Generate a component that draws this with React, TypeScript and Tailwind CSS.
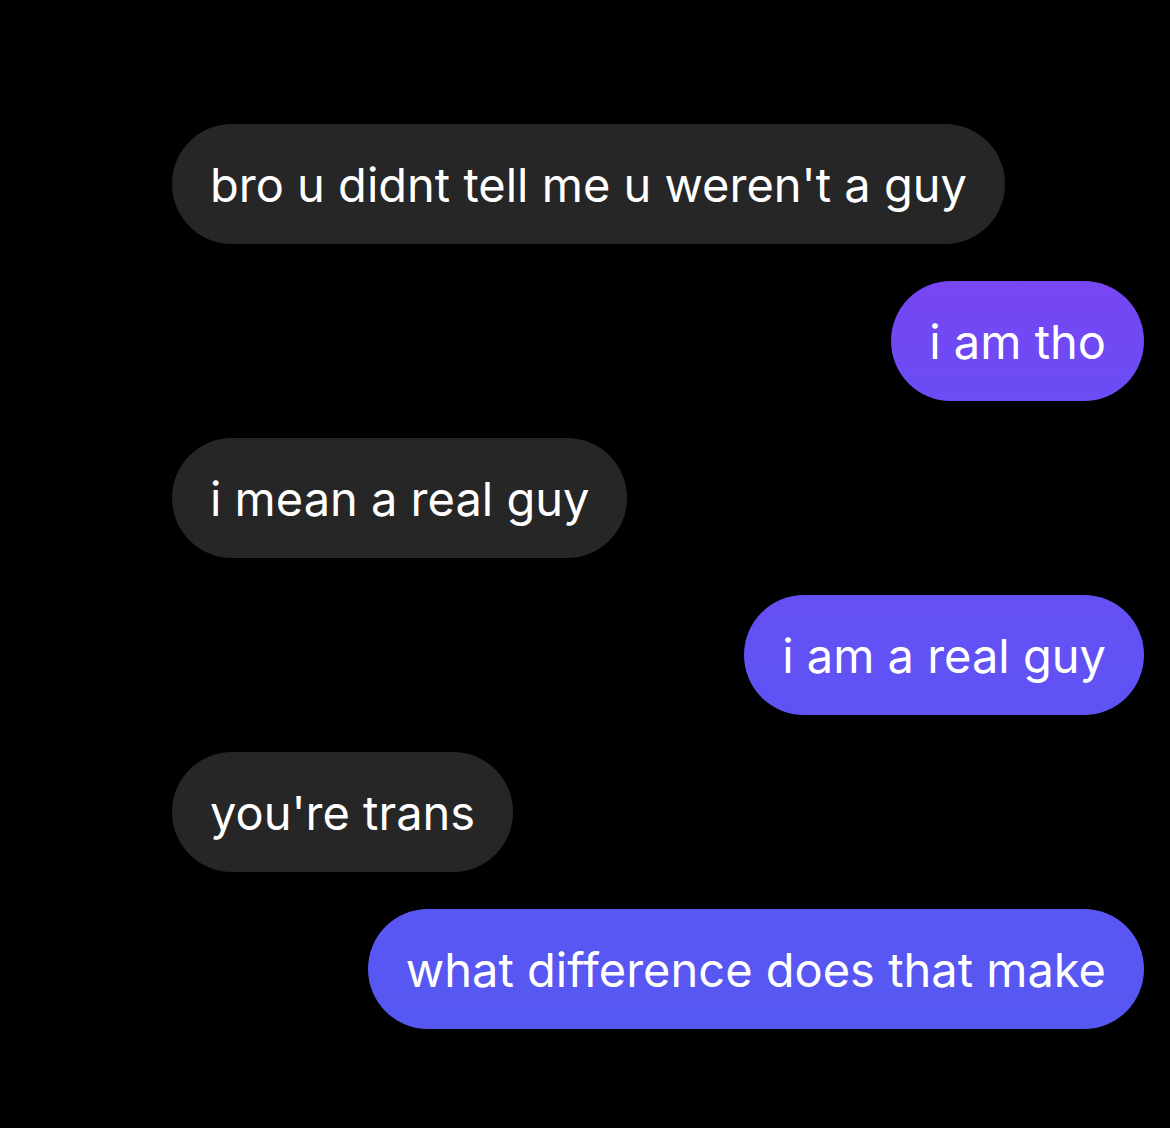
import React from 'react';

type Message = {
  text: string;
  mine: boolean;
  color?: string;
};

const messages: Message[] = [
  { text: "bro u didnt tell me u weren't a guy", mine: false },
  { text: 'i am tho', mine: true, color: 'bg-[linear-gradient(180deg,#7746f3,#6a4cf5)]' },
  { text: 'i mean a real guy', mine: false },
  { text: 'i am a real guy', mine: true, color: 'bg-[linear-gradient(180deg,#6550f4,#5e53f4)]' },
  { text: "you're trans", mine: false },
  { text: 'what difference does that make', mine: true, color: 'bg-[linear-gradient(180deg,#5a56f3,#5658f2)]' },
];

function Bubble({ text, mine, color }: Message) {
  return (
    <div
      className={
        mine
          ? `self-end mr-[26px] h-[120px] px-[38px] rounded-full flex items-center text-white ${color}`
          : 'self-start ml-[172px] h-[120px] px-[38px] rounded-full flex items-center text-white bg-[#262626]'
      }
    >
      <span className="text-[47px] leading-none whitespace-nowrap">{text}</span>
    </div>
  );
}

export default function App() {
  return (
    <div className="w-[1170px] h-[1128px] bg-black overflow-hidden font-['Inter','Liberation_Sans',sans-serif]">
      <div className="flex flex-col gap-[37px] pt-[124px]">
        {messages.map((m, i) => (
          <Bubble key={i} {...m} />
        ))}
      </div>
    </div>
  );
}
